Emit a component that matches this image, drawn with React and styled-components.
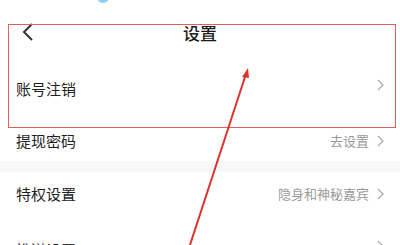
import styled, { createGlobalStyle } from 'styled-components';

const GlobalStyle = createGlobalStyle`
    html, body {
        margin: 0;
        padding: 0;
        background: #fff;
    }
    body {
        font-family: "Noto Sans CJK SC", "Noto Sans", sans-serif;
        color: #1f1f1f;
    }
`;

const Page = styled.div`
    position: relative;
    width: 400px;
    height: 245px;
    overflow: hidden;
    background: #fff;
`;

const StatusBar = styled.div`
    height: 18px;
    overflow: hidden;
    display: flex;
    align-items: flex-start;
    padding: 0 22px;
    gap: 12px;
    font-size: 14px;
    line-height: 14px;
    color: #666;
    span {
        margin-top: -13px;
    }
`;

const StatusDot = styled.i`
    display: block;
    width: 12px;
    height: 12px;
    margin-top: -9px;
    border-radius: 50%;
    background: #8fd0f0;
`;

const Header = styled.div`
    height: 28px;
    display: flex;
    align-items: center;
    justify-content: center;
    position: relative;
    h1 {
        margin: 0;
        font-size: 17px;
        font-weight: 500;
        color: #1a1a1a;
    }
`;

const Back = styled.div`
    position: absolute;
    left: 22px;
    top: 4px;
    display: flex;
`;

const Row = styled.div`
    display: flex;
    align-items: flex-start;
    justify-content: space-between;
    height: ${p => p.$h}px;
    padding: ${p => p.$top}px 16px 0;
    box-sizing: border-box;
`;

const Label = styled.div`
    font-size: 15px;
    line-height: 20px;
    color: #1f1f1f;
`;

const Extra = styled.div`
    display: flex;
    align-items: center;
    gap: 8px;
    font-size: 13px;
    line-height: 20px;
    color: #9a9a9a;
`;

const Divider = styled.div`
    height: 11px;
    background: #f8f8f8;
`;

const Box = styled.div`
    position: absolute;
    left: 8px;
    top: 24px;
    width: 388px;
    height: 104px;
    box-sizing: border-box;
    border: 1.5px solid #e0605a;
    pointer-events: none;
`;

const Arrow = styled.svg`
    position: absolute;
    left: 0;
    top: 0;
    pointer-events: none;
`;

const Chevron = () => (
    <svg width="7" height="12" viewBox="0 0 7 12">
        <polyline points="1,1 6,6 1,11" fill="none" stroke="#a8a8a8" strokeWidth="1.2" />
    </svg>
);

const rows = [
    { label: '账号注销', extra: '', h: 67, top: 33 },
    { label: '提现密码', extra: '去设置', h: 48, top: 18 },
];

const rows2 = [
    { label: '特权设置', extra: '隐身和神秘嘉宾', h: 52, top: 12 },
    { label: '推送设置', extra: '', h: 52, top: 16 },
];

const App = () => {
    return (
        <Page>
            <GlobalStyle />
            <StatusBar>
                <span>12:30 ⋅ 4G</span>
                <StatusDot />
            </StatusBar>
            <Header>
                <Back>
                    <svg width="12" height="20" viewBox="0 0 12 20">
                        <polyline points="10,2 2,10 10,18" fill="none" stroke="#333" strokeWidth="2" />
                    </svg>
                </Back>
                <h1>设置</h1>
            </Header>
            {rows.map(r => (
                <Row key={r.label} $h={r.h} $top={r.top}>
                    <Label>{r.label}</Label>
                    <Extra>{r.extra}<Chevron /></Extra>
                </Row>
            ))}
            <Divider />
            {rows2.map(r => (
                <Row key={r.label} $h={r.h} $top={r.top}>
                    <Label>{r.label}</Label>
                    <Extra>{r.extra}<Chevron /></Extra>
                </Row>
            ))}
            <Box />
            <Arrow width="400" height="245" viewBox="0 0 400 245">
                <line x1="189" y1="248" x2="246" y2="74" stroke="#d9352c" strokeWidth="2" />
                <polygon points="248,68 242,77 249,78" fill="#d9352c" />
            </Arrow>
        </Page>
    );
};

export default App;
